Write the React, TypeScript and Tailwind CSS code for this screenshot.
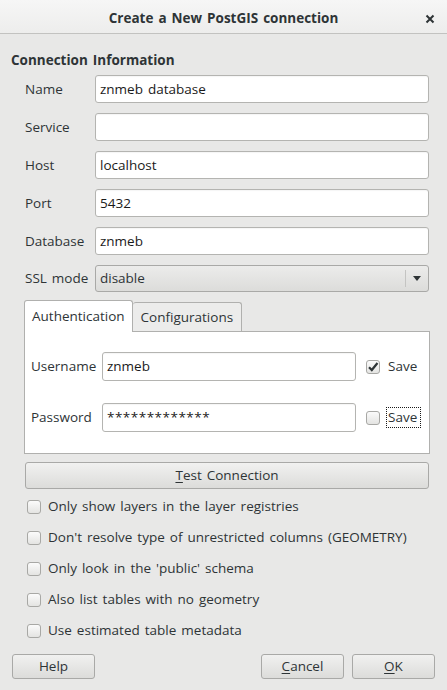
import React from "react";

const font = { fontFamily: '"Open Sans", "Noto Sans", sans-serif', wordSpacing: "1.5px" };

function TextField({ value, className = "" }: { value: string; className?: string }) {
  return (
    <div
      className={`flex h-[28px] items-center rounded-[3px] border border-[#b4b4b1] bg-white px-[4px] text-[13.5px] text-[#1a1a1a] shadow-[inset_0_1px_1px_rgba(0,0,0,0.04)] ${className}`}
    >
      {value}
    </div>
  );
}

function Check({ checked = false }: { checked?: boolean }) {
  return (
    <span className="flex h-[14px] w-[14px] shrink-0 items-center justify-center rounded-[3px] border border-[#a8a8a5] bg-gradient-to-b from-[#fbfbfb] to-[#e4e4e2]">
      {checked && (
        <svg width="12" height="12" viewBox="0 0 12 12">
          <path d="M2 6.2 L4.8 9 L10.5 2" fill="none" stroke="#2e3436" strokeWidth="2.2" />
        </svg>
      )}
    </span>
  );
}

function Button({ children, className = "" }: { children: React.ReactNode; className?: string }) {
  return (
    <div
      className={`flex items-center justify-center rounded-[3px] border border-[#a9a9a7] bg-gradient-to-b from-[#f1f1f0] to-[#dcdcda] text-[13.5px] text-[#2e3436] ${className}`}
    >
      {children}
    </div>
  );
}

const rows = [
  ["Name", "znmeb database"],
  ["Service", ""],
  ["Host", "localhost"],
  ["Port", "5432"],
  ["Database", "znmeb"],
];

const options = [
  "Only show layers in the layer registries",
  "Don't resolve type of unrestricted columns (GEOMETRY)",
  "Only look in the 'public' schema",
  "Also list tables with no geometry",
  "Use estimated table metadata",
];

export default function App() {
  return (
    <div style={font} className="flex h-[690px] w-[447px] flex-col bg-[#e8e8e7] text-[13.5px] text-[#2e3436]">
      <header className="relative flex h-[34px] shrink-0 items-center justify-center border-b border-[#c2c2c0] bg-gradient-to-b from-[#f6f6f6] to-[#ededec] pt-[3px]">
        <span className="font-bold text-[#2e3436]">Create a New PostGIS connection</span>
        <svg className="absolute right-[12px] top-[14px]" width="10" height="10" viewBox="0 0 10 10">
          <path d="M1.5 1.5 L8.5 8.5 M8.5 1.5 L1.5 8.5" stroke="#2e3436" strokeWidth="2" />
        </svg>
      </header>

      <div className="flex flex-col px-[11px]">
        <h2 className="mt-[17px] h-[18px] font-bold leading-[18px]">Connection Information</h2>

        <div className="mt-[6px] flex flex-col gap-[10px] pl-[14px] pr-[7px]">
          {rows.map(([label, value]) => (
            <div key={label} className="flex items-center">
              <span className="w-[70px] shrink-0">{label}</span>
              <TextField value={value} className="flex-1" />
            </div>
          ))}
          <div className="flex items-center">
            <span className="w-[70px] shrink-0">SSL mode</span>
            <div className="flex h-[27px] flex-1 items-center rounded-[3px] border border-[#a9a9a7] bg-gradient-to-b from-[#ececeb] to-[#dcdcda] pl-[4px]">
              <span className="flex-1">disable</span>
              <span className="h-[17px] w-px bg-[#c4c4c2]" />
              <svg className="mx-[7px]" width="8" height="5" viewBox="0 0 8 5">
                <path d="M0 0 H8 L4 5 Z" fill="#2e3436" />
              </svg>
            </div>
          </div>
        </div>

        <div className="mt-[8px] flex flex-col pl-[13px] pr-[6px]">
          <div className="flex items-end">
            <div className="relative z-10 -mb-px flex h-[32px] items-center rounded-t-[3px] border border-b-0 border-[#b0b0ae] bg-white px-[7px]">
              Authentication
            </div>
            <div className="flex h-[29px] items-center rounded-t-[3px] border border-b-0 border-l-0 border-[#b0b0ae] bg-[#ececeb] px-[8px]">
              Configurations
            </div>
          </div>
          <div className="flex flex-col gap-[22px] border border-[#b0b0ae] bg-white pb-[21px] pl-[6px] pr-[8px] pt-[20px]">
            <div className="flex items-center">
              <span className="w-[71px] shrink-0">Username</span>
              <TextField value="znmeb" className="h-[29px] flex-1" />
              <span className="ml-[10px] mr-[6px]">
                <Check checked />
              </span>
              <span className="w-[35px] px-[2px]">Save</span>
            </div>
            <div className="flex items-center">
              <span className="w-[71px] shrink-0">Password</span>
              <TextField value="*************" className="h-[29px] flex-1 tracking-[0.5px]" />
              <span className="ml-[10px] mr-[6px]">
                <Check />
              </span>
              <span className="w-[35px] border border-dotted border-[#1a1a1a] px-[1px] leading-[19px]">Save</span>
            </div>
          </div>
        </div>

        <Button className="ml-[14px] mr-[7px] mt-[8px] h-[27px]">
          <span className="underline underline-offset-2">T</span>est Connection
        </Button>

        <div className="mt-[2px] flex flex-col pl-[16px]">
          {options.map((o) => (
            <div key={o} className="flex h-[31px] items-center gap-[7px]">
              <Check />
              <span>{o}</span>
            </div>
          ))}
        </div>

        <div className="mt-[8px] flex items-center">
          <Button className="ml-[1px] h-[25px] w-[83px]">Help</Button>
          <div className="flex-1" />
          <Button className="h-[25px] w-[83px]">
            <span className="underline underline-offset-2">C</span>ancel
          </Button>
          <Button className="ml-[8px] mr-[1px] h-[25px] w-[83px]">
            <span className="underline underline-offset-2">O</span>K
          </Button>
        </div>
      </div>
    </div>
  );
}
